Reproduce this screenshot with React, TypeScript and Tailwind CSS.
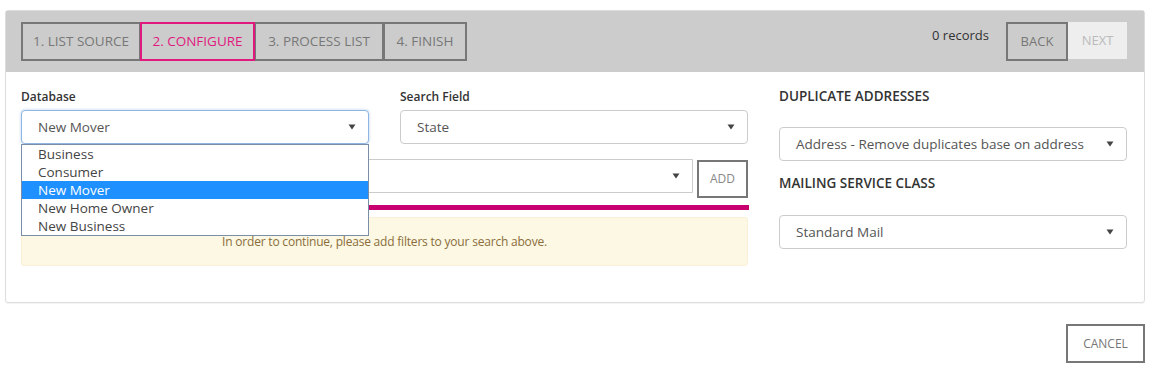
import React from "react";

const font = { fontFamily: '"Open Sans", "Liberation Sans", sans-serif' };

const Caret = () => (
  <svg width="8" height="6" viewBox="0 0 8 6" className="shrink-0">
    <path d="M0.5 0.5 L7.5 0.5 L4 5.5 Z" fill="#444" />
  </svg>
);

function FakeSelect({ value, focused = false, className = "" }: { value: string; focused?: boolean; className?: string }) {
  return (
    <div
      className={`flex items-center justify-between h-[34px] pl-4 pr-3 rounded-[4px] bg-white border text-[13.5px] text-[#555] ${
        focused ? "border-[#8fb6e2] shadow-[0_0_3px_rgba(102,153,220,0.5)]" : "border-[#ccc]"
      } ${className}`}
    >
      <span>{value}</span>
      <Caret />
    </div>
  );
}

const tabs = [
  { label: "1. LIST SOURCE", w: "w-[120px]" },
  { label: "2. CONFIGURE", w: "w-[115px]" },
  { label: "3. PROCESS LIST", w: "w-[130px]" },
  { label: "4. FINISH", w: "w-[84px]" },
];
const options = ["Business", "Consumer", "New Mover", "New Home Owner", "New Business"];

export default function App() {
  return (
    <div className="w-[1157px] h-[374px] bg-white pt-[10px] px-[5px]" style={font}>
      <div className="w-[1140px] border border-[#ddd] rounded-[3px] shadow-[0_1px_1px_rgba(0,0,0,0.05)]">
        {/* header / wizard steps */}
        <div className="flex items-start justify-between bg-[#cccccc] h-[61px] pl-[15px] pr-[17px] pt-[11px]">
          <div className="flex">
            {tabs.map((tab, i) => (
              <div
                key={tab.label}
                className={`${tab.w} h-[39px] flex items-center justify-center border-2 text-[13.5px] ${
                  i === 1
                    ? "border-[#e0197f] text-[#e0197f] relative z-10"
                    : "border-[#777] text-[#777]"
                } ${i > 0 ? "-ml-[1px]" : ""}`}
              >
                {tab.label}
              </div>
            ))}
          </div>
          <div className="flex items-start">
            <span className="text-[13px] text-[#333] mt-[4px] mr-[17px]">0 records</span>
            <div className="h-[39px] w-[62px] flex items-center justify-center border-2 border-[#777] text-[13px] text-[#777]">
              BACK
            </div>
            <div className="h-[37px] w-[59px] flex items-center justify-center bg-[#eeeeee] text-[13px] text-[#bbb]">
              NEXT
            </div>
          </div>
        </div>

        {/* body */}
        <div className="grid grid-cols-[727px_348px] gap-x-[31px] pl-[15px] pt-[17px] pb-[36px]">
          <div>
            <div className="grid grid-cols-[348px_348px] gap-x-[31px]">
              <div className="relative">
                <div className="text-[12px] font-semibold text-[#333] h-[16px] leading-[16px]">Database</div>
                <FakeSelect value="New Mover" focused className="mt-[5px]" />
                <div className="absolute left-0 top-[55px] w-[348px] bg-white border border-[#7a8ea8] z-20 text-[13.5px] text-[#444]">
                  {options.map((o) => (
                    <div
                      key={o}
                      className={`h-[18px] leading-[18px] pl-4 ${o === "New Mover" ? "bg-[#1e90ff] text-white" : ""}`}
                    >
                      {o}
                    </div>
                  ))}
                </div>
              </div>
              <div>
                <div className="text-[12px] font-semibold text-[#333] h-[16px] leading-[16px]">Search Field</div>
                <FakeSelect value="State" className="mt-[5px]" />
              </div>
            </div>

            <div className="flex items-start mt-[15px]">
              <FakeSelect value="" className="w-[672px] rounded-r-none" />
              <div className="ml-[4px] mt-[1px] h-[38px] w-[51px] flex items-center justify-center border-2 border-[#777] bg-white text-[12px] text-[#888]">
                ADD
              </div>
            </div>

            <div className="mt-[7px] h-[5px] bg-[#c8006f] w-[728px]" />

            <div className="mt-[7px] h-[49px] flex items-center justify-center bg-[#fcf8e3] border border-[#faf0d7] rounded-[3px] text-[12px] text-[#8a6d3b] tracking-[-0.2px]">
              In order to continue, please add filters to your search above.
            </div>
          </div>

          <div>
            <div className="text-[13.5px] font-semibold text-[#333] h-[16px] leading-[16px] -mt-[1px]">DUPLICATE ADDRESSES</div>
            <FakeSelect value="Address - Remove duplicates base on address" className="mt-[23px] h-[33px]" />
            <div className="text-[13.5px] font-semibold text-[#333] h-[16px] leading-[16px] mt-[14px]">MAILING SERVICE CLASS</div>
            <FakeSelect value="Standard Mail" className="mt-[24px] h-[33px]" />
          </div>
        </div>
      </div>

      <div className="flex justify-end mt-[21px] pr-[7px]">
        <div className="h-[39px] w-[79px] flex items-center justify-center border-2 border-[#777] text-[12px] text-[#777]">
          CANCEL
        </div>
      </div>
    </div>
  );
}
